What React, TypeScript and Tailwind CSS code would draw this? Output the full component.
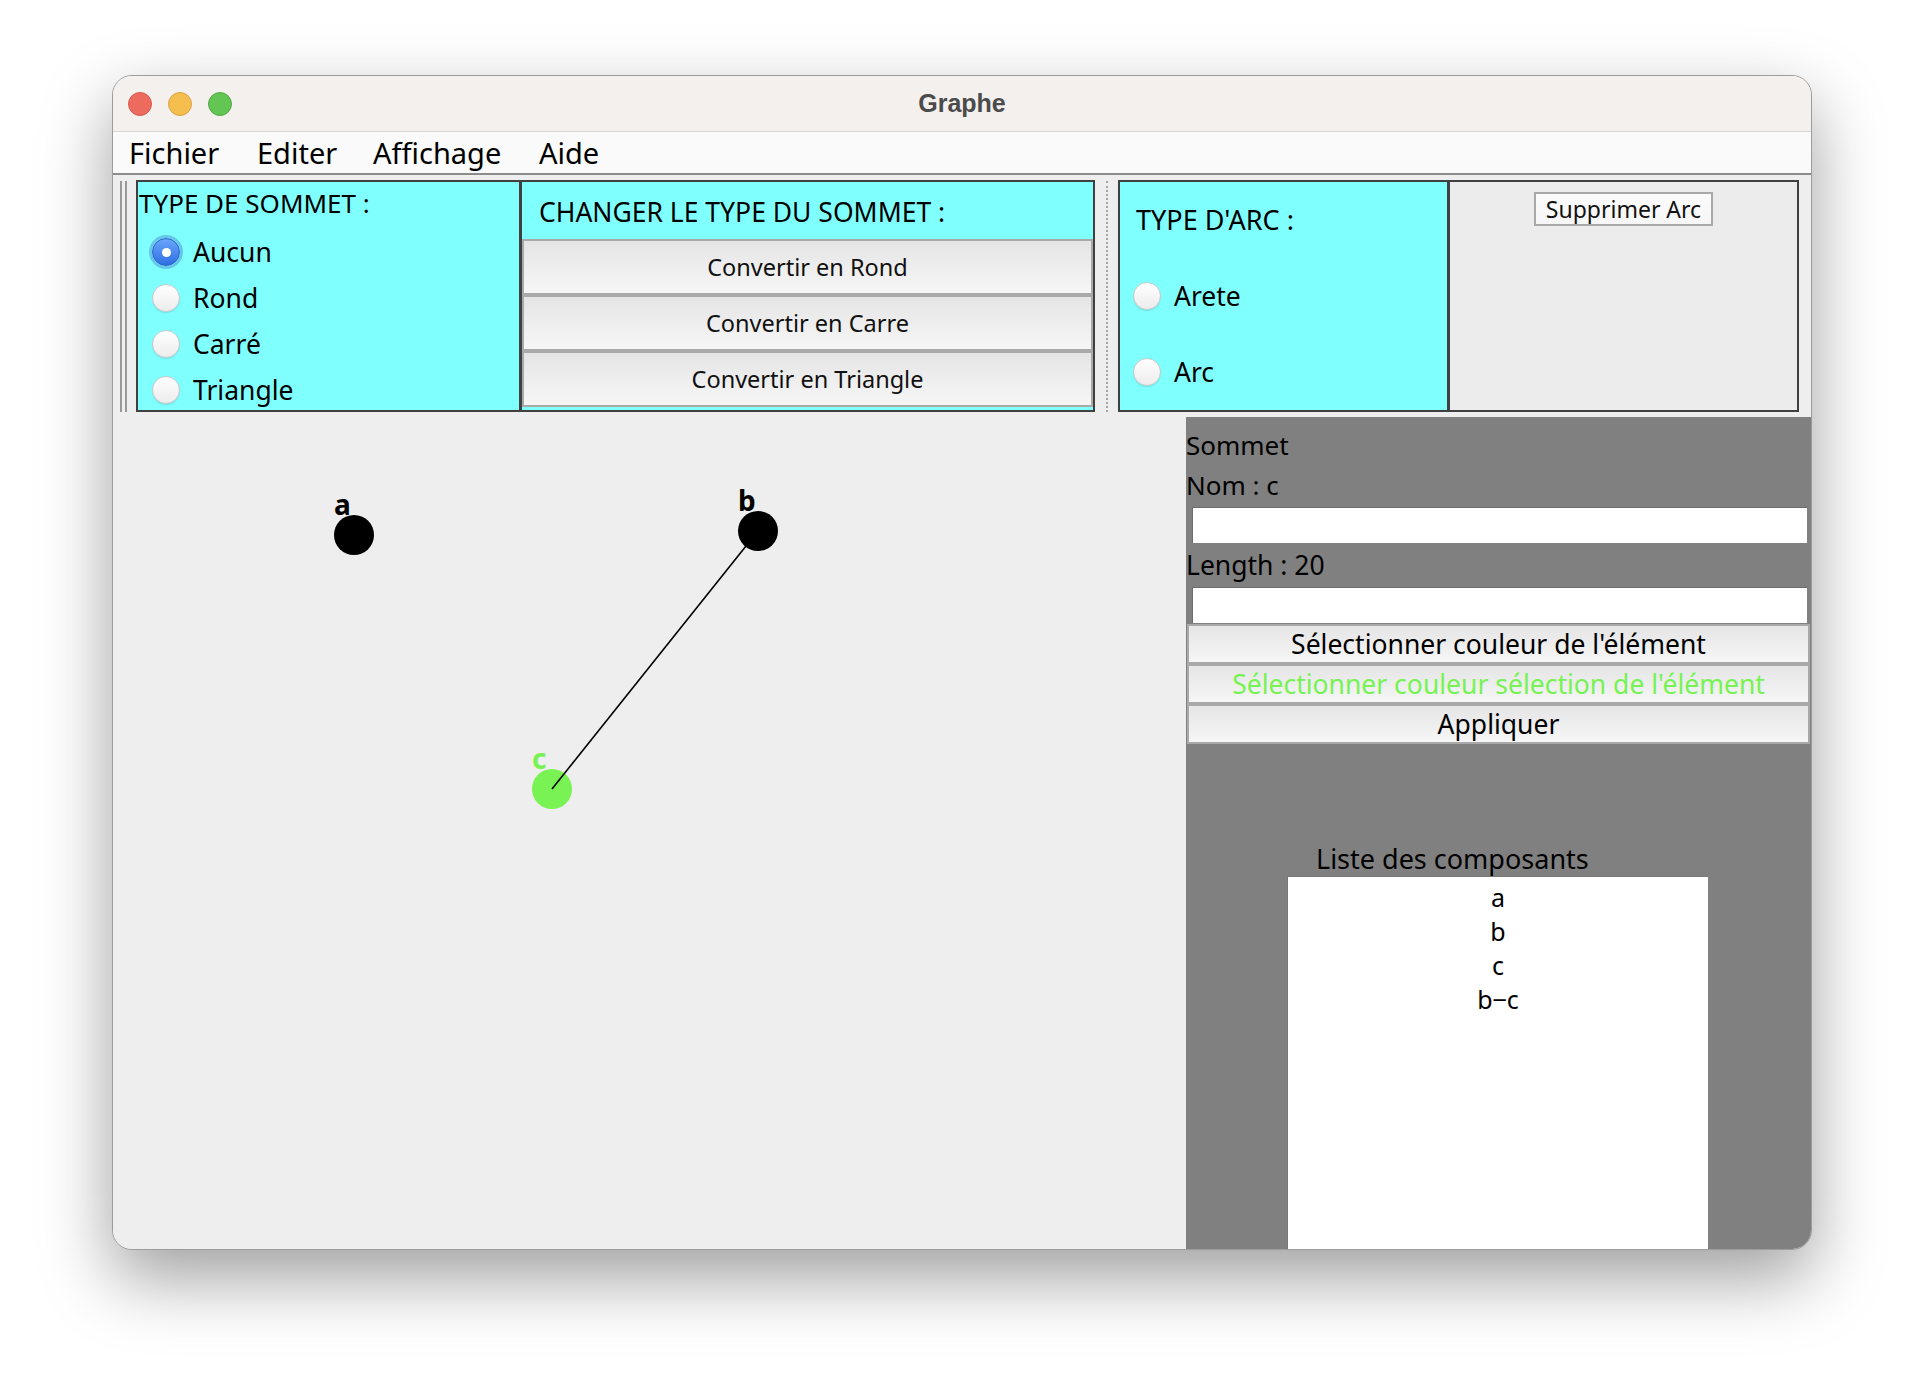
import React from "react";

const FONT = { fontFamily: "'Noto Sans', 'DejaVu Sans', sans-serif" };

function Radio({ checked }: { checked?: boolean }) {
  if (checked) {
    return (
      <span className="flex h-[28px] w-[28px] shrink-0 items-center justify-center rounded-full border border-[#2b5fc4] bg-gradient-to-b from-[#6aa6fb] to-[#2f6ee3] shadow-[0_0_0_3px_rgba(70,130,210,0.45)]">
        <span className="h-[9px] w-[9px] rounded-full bg-white" />
      </span>
    );
  }
  return (
    <span className="h-[28px] w-[28px] shrink-0 rounded-full border border-[#c9c9c9] bg-gradient-to-b from-[#ffffff] to-[#ececec] shadow-[0_1px_1px_rgba(0,0,0,0.12)]" />
  );
}

function SwingButton({ label, className = "" }: { label: string; className?: string }) {
  return (
    <div
      className={`flex items-center justify-center border-2 border-[#a9a9a9] bg-gradient-to-b from-[#e5e5e5] to-[#f6f6f6] ${className}`}
    >
      {label}
    </div>
  );
}

export default function App() {
  const sommetTypes = ["Aucun", "Rond", "Carré", "Triangle"];
  const convertButtons = ["Convertir en Rond", "Convertir en Carre", "Convertir en Triangle"];
  const composants = ["a", "b", "c", "b‒c"];

  return (
    <div className="min-h-screen bg-white pl-[112px] pt-[75px]" style={FONT}>
      <div className="flex h-[1175px] w-[1700px] flex-col overflow-hidden rounded-[20px] border border-[#9c9c9c] bg-[#eeeeee] shadow-[0_28px_70px_rgba(0,0,0,0.38)]">
        {/* title bar */}
        <div className="grid h-[56px] grid-cols-[1fr_auto_1fr] items-center border-b border-[#dbd7d4] bg-[#f4f0ed]">
          <div className="flex items-center gap-[16px] pl-[15px]">
            <span className="h-[24px] w-[24px] rounded-full border border-[#d65a4e] bg-[#ed6a5e]" />
            <span className="h-[24px] w-[24px] rounded-full border border-[#d9a344] bg-[#f5bf4f]" />
            <span className="h-[24px] w-[24px] rounded-full border border-[#55aa48] bg-[#62c554]" />
          </div>
          <div
            className="text-[25px] font-bold text-[#4b4b4b]"
            style={{ fontFamily: "'Liberation Sans', Arial, sans-serif" }}
          >
            Graphe
          </div>
          <div />
        </div>

        {/* menu bar */}
        <div className="flex h-[43px] items-center border-b-2 border-[#8c8c8c] bg-[#fafafa] pl-[16px] text-[29px] leading-[41px] text-black">
          <span className="w-[128px]">Fichier</span>
          <span className="w-[116px]">Editer</span>
          <span className="w-[166px]">Affichage</span>
          <span>Aide</span>
        </div>

        {/* toolbar */}
        <div className="flex h-[242px] items-start bg-[#eeeeee] pt-[5px] text-[26px] text-black">
          <div className="ml-[7px] mt-[1px] h-[231px] w-[7px] border-x-2 border-[#999999]" />

          {/* type de sommet */}
          <div className="ml-[9px] h-[232px] w-[385px] overflow-hidden border-2 border-[#404040] bg-[#80ffff]">
            <div className="pl-[1px] pt-[6px] leading-[30px]">TYPE DE SOMMET :</div>
            <div className="mt-[11px]">
              {sommetTypes.map((t, i) => (
                <div key={t} className="flex h-[46px] items-center pl-[14px]">
                  <Radio checked={i === 0} />
                  <span className="ml-[13px] text-[26.5px] leading-[30px]">{t}</span>
                </div>
              ))}
            </div>
          </div>

          {/* changer le type */}
          <div className="flex h-[232px] w-[574px] flex-col border-2 border-l-[1px] border-[#404040] bg-[#80ffff]">
            <div className="h-[57px] pl-[17px] pt-[15px] text-[26.5px] leading-[30px]">CHANGER LE TYPE DU SOMMET :</div>
            {convertButtons.map((b) => (
              <SwingButton key={b} label={b} className="h-[56px] pt-[2px] text-[23.5px] text-[#111]" />
            ))}
          </div>

          <div className="ml-[11px] mt-[1px] h-[231px] border-l-2 border-dotted border-[#a5a5a5]" />

          {/* type d'arc */}
          <div className="ml-[10px] h-[232px] w-[331px] border-2 border-[#404040] bg-[#80ffff]">
            <div className="pl-[16px] pt-[23px] text-[27px] leading-[30px]">TYPE D'ARC :</div>
            <div className="mt-[38px] flex h-[46px] items-center pl-[13px]">
              <Radio />
              <span className="ml-[13px] text-[26.5px] leading-[30px]">Arete</span>
            </div>
            <div className="mt-[30px] flex h-[46px] items-center pl-[13px]">
              <Radio />
              <span className="ml-[13px] text-[26.5px] leading-[30px]">Arc</span>
            </div>
          </div>

          <div className="flex h-[232px] w-[350px] justify-center border-2 border-l-[1px] border-[#404040] bg-[#ececec]">
            <SwingButton
              label="Supprimer Arc"
              className="mt-[10px] h-[34px] w-[179px] from-[#fbfbfb] to-[#ededed] text-[23px] text-[#111]"
            />
          </div>
        </div>

        {/* main area */}
        <div className="flex flex-1">
          {/* canvas */}
          <div className="w-[1073px] bg-[#eeeeee]">
            <svg width="1073" height="831" viewBox="0 0 1073 831">
              <circle cx="439" cy="372" r="20" fill="#79f254" />
              <line x1="439" y1="372" x2="645" y2="114" stroke="#000" strokeWidth="1.6" />
              <circle cx="241" cy="118" r="20" fill="#000" />
              <circle cx="645" cy="114" r="20" fill="#000" />
              <g style={FONT} fontSize="28" fontWeight="700">
                <text x="221" y="98" fill="#000">a</text>
                <text x="625" y="94" fill="#000">b</text>
                <text x="419" y="352" fill="#79f254">c</text>
              </g>
            </svg>
          </div>

          {/* properties panel */}
          <div className="flex flex-1 flex-col bg-[#808080] pt-[8px] text-[26px] text-black">
            <div className="leading-[40px]">Sommet</div>
            <div className="leading-[40px]">Nom : c</div>
            <div className="ml-[6px] mr-[4px] mt-[2px] h-[36px] border-t border-l border-[#6c6c6c] bg-white" />
            <div className="mt-[2px] text-[26.5px] leading-[40px]">Length : 20</div>
            <div className="ml-[6px] mr-[4px] mt-[2px] h-[36px] border-t border-l border-[#6c6c6c] bg-white" />
            <div className="mx-[1px] mt-[1px] flex flex-col text-[26.5px]">
              <SwingButton label="Sélectionner couleur de l'élément" className="h-[40px] pt-[2px]" />
              <SwingButton label="Sélectionner couleur sélection de l'élément" className="h-[40px] pt-[2px] text-[#76f353]" />
              <SwingButton label="Appliquer" className="h-[40px] pt-[2px]" />
            </div>
            <div className="mt-[100px] pl-[130px] text-[27px] leading-[30px]">Liste des composants</div>
            <div className="ml-[101px] mt-[2px] w-[421px] flex-1 border-l border-t border-[#777777] bg-white pt-[3px] text-[25px]">
              {composants.map((c) => (
                <div key={c} className="text-center leading-[34px]">
                  {c}
                </div>
              ))}
            </div>
          </div>
        </div>
      </div>
    </div>
  );
}
